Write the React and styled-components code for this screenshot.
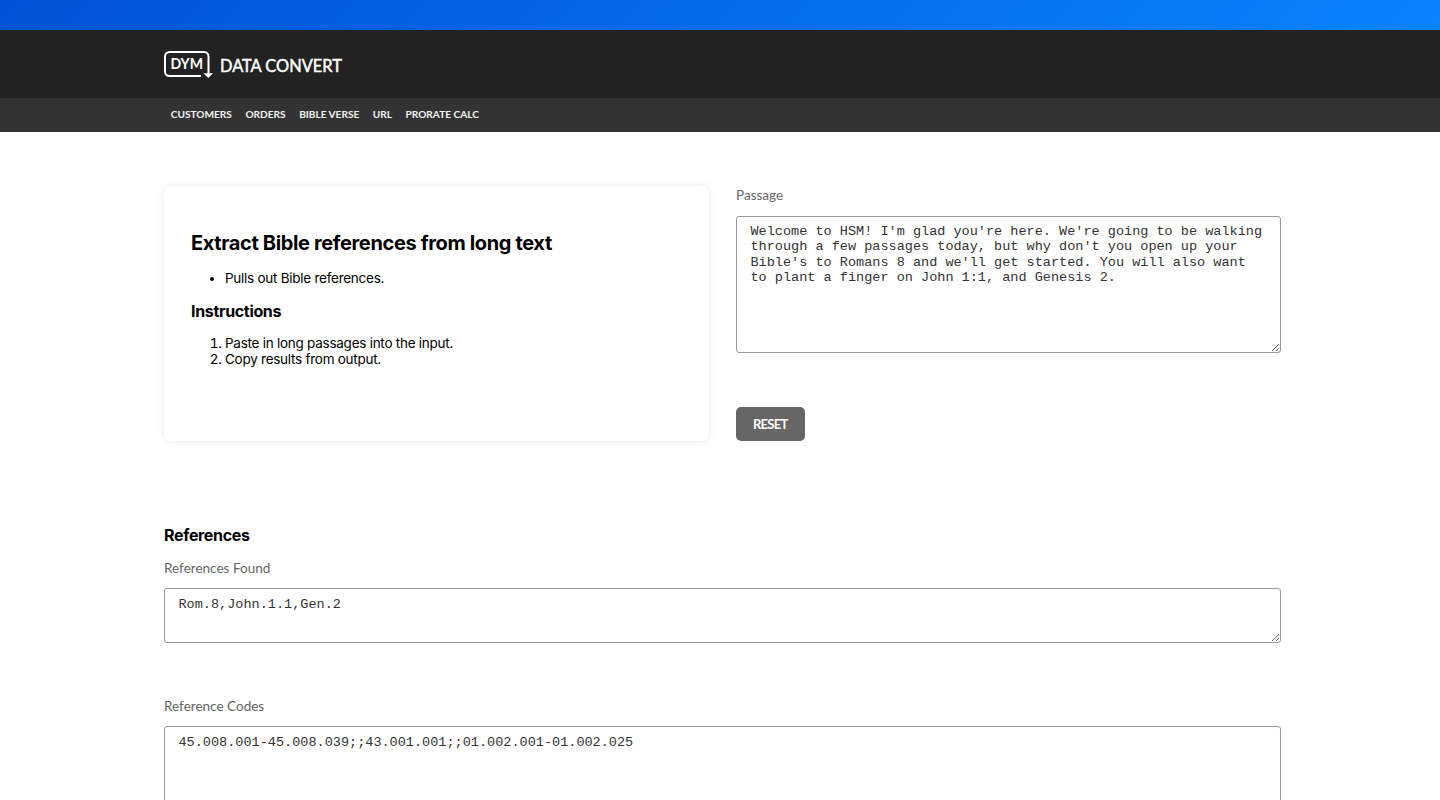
import React from "react";
import styled, { createGlobalStyle } from "styled-components";

const GlobalStyle = createGlobalStyle`
  *, *::before, *::after { box-sizing: border-box; }
  html, body { margin: 0; padding: 0; }
  body {
    height: 800px;
    overflow: hidden;
    background: #fff;
    color: #000;
    font-family: Inter, "Liberation Sans", sans-serif;
    font-size: 13.5px;
  }
`;

const Page = styled.div`
  height: 800px;
  overflow: hidden;
`;

const TopBar = styled.div`
  height: 30px;
  background: linear-gradient(135deg, #0053d4 0%, #0a84ff 100%);
`;

const Container = styled.div`
  width: 1117px;
  margin-left: 164px;
`;

const Header = styled.header`
  height: 68px;
  background: #222;
`;

const Brand = styled(Container)`
  display: flex;
  align-items: center;
  gap: 7px;
  height: 68px;
  color: #fff;
  font-family: Lato, sans-serif;
`;

const LogoMark = styled.svg`
  display: block;
  width: 49px;
  height: 28px;
`;

const BrandName = styled.span`
  font-size: 16.4px;
  line-height: 20px;
  padding-top: 3px;
  -webkit-text-stroke: 0.45px #fff;
`;

const Nav = styled.nav`
  height: 34px;
  background: #333;
`;

const NavList = styled(Container)`
  display: flex;
  align-items: center;
  gap: 13.5px;
  height: 33px;
  padding-left: 6.75px;
`;

const NavLink = styled.a`
  color: #f4f4f4;
  font: 700 10.125px/13px Lato, sans-serif;
  text-decoration: none;
`;

const Main = styled.main`
  padding-top: 53px;
`;

const Intro = styled(Container)`
  display: grid;
  grid-template-columns: 545px 545px;
  gap: 27px;
  height: 256px;
`;

const Card = styled.section`
  margin-top: 1px;
  padding: 45px 27px;
  border-radius: 7px;
  box-shadow: 0 0 7px rgba(0, 0, 0, 0.1);
`;

const Title = styled.h1`
  margin: 0;
  font-size: 20px;
  line-height: 24px;
  font-weight: 700;
  letter-spacing: -0.36px;
`;

const Subtitle = styled.h2`
  margin: 0;
  font-size: 16px;
  line-height: 20px;
  font-weight: 700;
  letter-spacing: -0.33px;
`;

const List = styled.ul`
  margin: ${(p) => p.$margin};
  padding-left: 34px;
  font-size: 13.5px;
  line-height: 15.4px;
  letter-spacing: -0.26px;
`;

const Column = styled.div`
  display: flex;
  flex-direction: column;
  align-items: flex-start;
`;

const Label = styled.label`
  display: block;
  height: 16px;
  margin: ${(p) => p.$margin || "0"};
  color: #666;
  font: 400 13.54px/16px Lato, sans-serif;
`;

const Field = styled.textarea`
  display: block;
  width: 100%;
  height: ${(p) => p.$height}px;
  padding: ${(p) => p.$top || 7}px 13.5px 0;
  border: 1px solid #999;
  border-radius: 3px;
  background: #fff;
  color: #333;
  font: 13.54px/15.3px "Liberation Mono", monospace;
  outline: none;
  overflow: hidden;
`;

const ResetButton = styled.button`
  width: 68.500px;
  height: 34px;
  margin-top: 54px;
  padding: 0;
  border: 0;
  border-radius: 5px;
  background: #666;
  color: #fff;
  font: 700 13px/34px Lato, sans-serif;
  letter-spacing: -0.7px;
`;

const Results = styled(Container)`
  padding-top: 84px;
`;

const links = ["CUSTOMERS", "ORDERS", "BIBLE VERSE", "URL", "PRORATE CALC"];

const passage =
  "Welcome to HSM! I'm glad you're here. We're going to be walking through a few passages today, but why don't you open up your Bible's to Romans 8 and we'll get started. You will also want to plant a finger on John 1:1, and Genesis 2.";

function Logo() {
  return (
    <LogoMark viewBox="0 0 49 28" fill="none">
      <path
        d="M37 26H5.5A4.5 4.5 0 0 1 1 21.500V6.500A4.500 4.500 0 0 1 5.500 2H40A4.500 4.500 0 0 1 44.500 6.500V24"
        stroke="#fff"
        strokeWidth="2"
      />
      <path d="M39.500 23.300H49L44.300 28Z" fill="#fff" />
      <text
        x="6.500"
        y="19"
        fill="#fff"
        fontFamily="Lato, sans-serif"
        fontSize="14.800"
        fontWeight="700"
        textLength="32.500"
        lengthAdjust="spacingAndGlyphs"
      >
        DYM
      </text>
    </LogoMark>
  );
}

export default function App() {
  return (
    <Page>
      <GlobalStyle />
      <TopBar />
      <Header>
        <Brand>
          <Logo />
          <BrandName>DATA CONVERT</BrandName>
        </Brand>
      </Header>
      <Nav>
        <NavList>
          {links.map((name) => (
            <NavLink key={name}>{name}</NavLink>
          ))}
        </NavList>
      </Nav>
      <Main>
        <Intro>
          <Card>
            <Title>Extract Bible references from long text</Title>
            <List $margin="16px 0 15px">
              <li>Pulls out Bible references.</li>
            </List>
            <Subtitle>Instructions</Subtitle>
            <List as="ol" $margin="15px 0 0">
              <li>Paste in long passages into the input.</li>
              <li>Copy results from output.</li>
            </List>
          </Card>
          <Column>
            <Label htmlFor="passage" $margin="2px 0 13px">Passage</Label>
            <Field id="passage" $height={137} spellCheck={false} defaultValue={passage} />
            <ResetButton>RESET</ResetButton>
          </Column>
        </Intro>
        <Results>
          <Subtitle>References</Subtitle>
          <Label htmlFor="found" $margin="15px 0 12px">References Found</Label>
          <Field id="found" $height={55} $top={8} spellCheck={false} defaultValue="Rom.8,John.1.1,Gen.2" />
          <Label htmlFor="codes" $margin="55px 0 12px">Reference Codes</Label>
          <Field
            id="codes"
            $height={137}
            $top={8}
            spellCheck={false}
            defaultValue="45.008.001-45.008.039;;43.001.001;;01.002.001-01.002.025"
          />
        </Results>
      </Main>
    </Page>
  );
}
